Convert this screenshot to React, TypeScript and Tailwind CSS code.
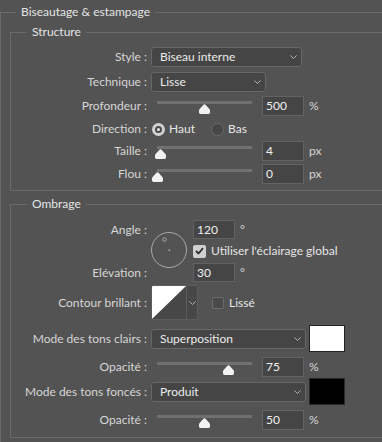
import React from "react";

const Chevron = () => (
  <svg width="7" height="4" viewBox="0 0 7 4" className="block">
    <path d="M0.5 0.5 L3.5 3.5 L6.5 0.5" fill="none" stroke="#b4b4b4" strokeWidth="1" />
  </svg>
);

const Select = ({ value, w }: { value: string; w: string }) => (
  <div className={`${w} h-[20px] bg-[#454545] border border-[#676767] rounded-[3px] pl-[8px] pr-[4px] flex items-center justify-between text-[#ebebeb]`}>
    <span>{value}</span>
    <Chevron />
  </div>
);

const Thumb = () => (
  <svg width="11" height="10" viewBox="0 0 11 10" className="block">
    <path d="M5.5 0.3 Q6.2 0.3 7 1.2 L10.4 5 Q11 5.6 11 6.5 L11 8.6 Q11 10 9.6 10 L1.4 10 Q0 10 0 8.6 L0 6.5 Q0 5.6 0.6 5 L4 1.2 Q4.8 0.3 5.5 0.3 Z" fill="#f2f2f2" />
  </svg>
);

const Slider = ({ frac }: { frac: number }) => (
  <div className="relative w-[111px] h-[20px] shrink-0">
    <div className="mt-[5px] ml-[6px] w-[95px] h-[3px] bg-[#707070]" />
    <div className="absolute top-[8px]" style={{ left: 6 + 95 * frac - 5.5 }}>
      <Thumb />
    </div>
  </div>
);

const NumInput = ({ value, h = "h-[20px]" }: { value: string; h?: string }) => (
  <div className={`w-[42px] ${h} bg-[#454545] border border-[#636363] pl-[3px] flex items-center text-[#f0f0f0] shrink-0`}>
    {value}
  </div>
);

const Label = ({ children }: { children: React.ReactNode }) => (
  <div className="w-[136px] shrink-0 text-right text-[#d6d6d6] whitespace-nowrap">{children}</div>
);

const SliderRow = ({ label, frac, value, unit, mt }: { label: string; frac: number; value: string; unit: string; mt: string }) => (
  <div className={`flex items-center h-[20px] ${mt}`}>
    <Label>{label}</Label>
    <div className="ml-[4px] flex items-center">
      <Slider frac={frac} />
      <NumInput value={value} />
      <span className="ml-[5px] text-[#d6d6d6]">{unit}</span>
    </div>
  </div>
);

const Radio = ({ checked }: { checked: boolean }) =>
  checked ? (
    <div className="w-[13px] h-[13px] rounded-full bg-[#d2d2d2] flex items-center justify-center shrink-0">
      <div className="w-[7px] h-[7px] rounded-full border-[2px] border-[#4a4a4a] bg-[#e6e6e6]" />
    </div>
  ) : (
    <div className="w-[13px] h-[13px] rounded-full bg-[#474747] border border-[#6a6a6a] shrink-0" />
  );

const Check = ({ checked }: { checked: boolean }) =>
  checked ? (
    <div className="w-[13px] h-[13px] rounded-[2px] bg-[#d0d0d0] flex items-center justify-center shrink-0">
      <svg width="9" height="8" viewBox="0 0 9 8" className="block">
        <path d="M1 4 L3.5 6.5 L8 1.2" fill="none" stroke="#2e2e2e" strokeWidth="1.8" />
      </svg>
    </div>
  ) : (
    <div className="w-[12px] h-[12px] rounded-[2px] bg-[#4a4a4a] border border-[#6c6c6c] shrink-0" />
  );

export default function App() {
  return (
    <div className="w-[382px] h-[442px] overflow-hidden bg-[#535353] pt-[4px] text-[12px] leading-[16px] font-['Lato',sans-serif]">
      <fieldset className="w-[420px] border border-[#6a6a6a] pl-[9px] pb-[20px]">
        <legend className="ml-[6px] px-[5px] leading-[16px] text-[#e4e4e4]">Biseautage &amp; estampage</legend>

        {/* Structure */}
        <fieldset className="mt-[4px] w-[410px] border border-[#6a6a6a]">
          <legend className="ml-[16px] px-[5px] leading-[16px] text-[#e4e4e4]">Structure</legend>
          <div className="pt-[7px] pb-[6px] flex flex-col">
            <div className="flex items-center h-[20px]">
              <Label>Style :</Label>
              <div className="ml-[4px]">
                <Select value="Biseau interne" w="w-[151px]" />
              </div>
            </div>
            <div className="flex items-center h-[20px] mt-[5px]">
              <Label>Technique :</Label>
              <div className="ml-[4px]">
                <Select value="Lisse" w="w-[115px]" />
              </div>
            </div>
            <SliderRow label="Profondeur :" frac={0.5} value="500" unit="%" mt="mt-[4px]" />
            <div className="flex items-center h-[20px] mt-[3px]">
              <Label>Direction :</Label>
              <div className="ml-[5px] flex items-center">
                <div className="w-[59px] flex items-center gap-[4px]">
                  <Radio checked />
                  <span className="text-[#e6e6e6]">Haut</span>
                </div>
                <div className="flex items-center gap-[4px]">
                  <Radio checked={false} />
                  <span className="text-[#e6e6e6]">Bas</span>
                </div>
              </div>
            </div>
            <SliderRow label="Taille :" frac={0.036} value="4" unit="px" mt="mt-[2px]" />
            <SliderRow label="Flou :" frac={0} value="0" unit="px" mt="mt-[3px]" />
          </div>
        </fieldset>

        {/* Ombrage */}
        <fieldset className="mt-[5px] w-[410px] border border-[#6a6a6a]">
          <legend className="ml-[16px] px-[5px] leading-[16px] text-[#e4e4e4]">Ombrage</legend>
          <div className="pt-[8px] pb-[7px] flex flex-col">
            <div className="grid grid-cols-[136px_38px_1fr] grid-rows-[19px_24px_19px] gap-x-[4px]">
              <div className="col-start-1 row-start-1 text-right text-[#d6d6d6] flex items-center justify-end">Angle :</div>
              <div className="col-start-1 row-start-3 text-right text-[#d6d6d6] flex items-center justify-end">Elévation :</div>
              <div className="col-start-2 row-start-1 row-span-3 mt-[12px]">
                <svg width="37" height="37" viewBox="0 0 37 37" className="block">
                  <circle cx="18" cy="18" r="17.5" fill="none" stroke="#a8a8a8" strokeWidth="1" />
                  <circle cx="13.5" cy="7.5" r="1.8" fill="none" stroke="#a8a8a8" strokeWidth="1" />
                  <rect x="17.5" y="17.5" width="1.5" height="1.5" fill="#b0b0b0" />
                </svg>
              </div>
              <div className="col-start-3 row-start-1 flex items-start">
                <NumInput value="120" h="h-[19px]" />
                <span className="ml-[5px] mt-[3px] text-[#d6d6d6] leading-[14px]">°</span>
              </div>
              <div className="col-start-3 row-start-2 flex items-center gap-[5px]">
                <Check checked />
                <span className="text-[#e6e6e6] whitespace-nowrap">Utiliser l'éclairage global</span>
              </div>
              <div className="col-start-3 row-start-3 flex items-start">
                <NumInput value="30" h="h-[19px]" />
                <span className="ml-[5px] mt-[3px] text-[#d6d6d6] leading-[14px]">°</span>
              </div>
            </div>

            <div className="flex items-center h-[35px] mt-[3px]">
              <Label>Contour brillant :</Label>
              <div className="ml-[4px] flex items-center">
                <div className="flex h-[35px] w-[47px] border border-[#5c5c5c] rounded-[2px] overflow-hidden">
                  <svg width="34" height="33" viewBox="0 0 34 33" className="block shrink-0">
                    <rect width="34" height="33" fill="#474747" />
                    <polygon points="0,0 34,0 0,33" fill="#ffffff" />
                  </svg>
                  <div className="flex-1 bg-[#474747] border-l border-[#5c5c5c] flex items-center justify-center">
                    <Chevron />
                  </div>
                </div>
                <div className="ml-[14px] flex items-center gap-[5px]">
                  <Check checked={false} />
                  <span className="text-[#e6e6e6]">Lissé</span>
                </div>
              </div>
            </div>

            <div className="flex items-center h-[27px] mt-[5px]">
              <Label>Mode des tons clairs :</Label>
              <div className="ml-[4px] flex items-center">
                <Select value="Superposition" w="w-[155px]" />
                <div className="ml-[3px] w-[36px] h-[27px] border border-[#222222] bg-white" />
              </div>
            </div>
            <SliderRow label="Opacité :" frac={0.75} value="75" unit="%" mt="mt-[5px]" />
            <div className="flex items-center h-[27px] mt-[1px]">
              <Label>Mode des tons foncés :</Label>
              <div className="ml-[4px] flex items-center">
                <Select value="Produit" w="w-[155px]" />
                <div className="ml-[3px] w-[36px] h-[27px] border border-[#2a2a2a] bg-black" />
              </div>
            </div>
            <SliderRow label="Opacité :" frac={0.5} value="50" unit="%" mt="mt-[5px]" />
          </div>
        </fieldset>
      </fieldset>
    </div>
  );
}
